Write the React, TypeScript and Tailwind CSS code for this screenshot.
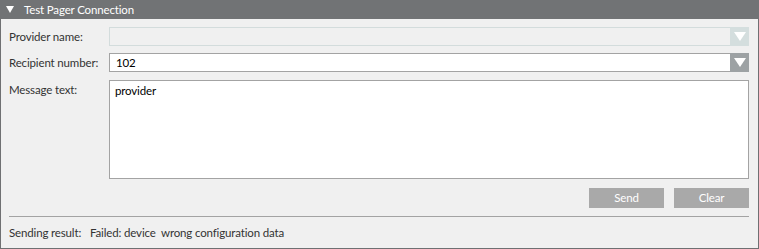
export default function App() {
  return (
    <div
      className="w-[759px] h-[249px] flex flex-col bg-[#f0f0f0] text-[11.5px] tracking-[-0.15px] text-[#333] whitespace-nowrap"
      style={{ fontFamily: '"Segoe UI", Lato, sans-serif' }}
    >
      {/* ── HEADER ── */}
      <div className="h-[19px] shrink-0 bg-[#717375] flex items-center text-white">
        <span className="ml-[6px] w-0 h-0 border-l-[4px] border-r-[4px] border-t-[7px] border-l-transparent border-r-transparent border-t-white" />
        <span className="ml-[10px] leading-none">Test Pager Connection</span>
      </div>

      {/* ── BODY ── */}
      <div className="flex-1 flex flex-col border-x border-b border-[#6f7072] pl-[8px] pr-[9px] pt-[8px]">
        <div className="flex items-center h-[19px]">
          <span className="w-[100px] shrink-0">Provider name:</span>
          <div className="flex-1 flex h-full border border-[#d3dcdc] bg-[#f0f0f0]">
            <div className="flex-1" />
            <div className="w-[19px] bg-[#d4dede] flex items-center justify-center -my-px -mr-px">
              <span className="w-0 h-0 border-l-[6px] border-r-[6px] border-t-[9px] border-l-transparent border-r-transparent border-t-white" />
            </div>
          </div>
        </div>

        <div className="flex items-center h-[19px] mt-[7px]">
          <span className="w-[100px] shrink-0">Recipient number:</span>
          <div className="flex-1 flex h-full border border-[#a3a3a3] bg-white">
            <div className="flex-1 pl-[6px] flex items-center text-black">102</div>
            <div className="w-[19px] bg-[#9da2a4] flex items-center justify-center -my-px -mr-px">
              <span className="w-0 h-0 border-l-[6px] border-r-[6px] border-t-[9px] border-l-transparent border-r-transparent border-t-white" />
            </div>
          </div>
        </div>

        <div className="flex mt-[8px]">
          <span className="w-[100px] shrink-0 pt-[1px]">Message text:</span>
          <div className="flex-1 h-[99px] border border-[#a3a3a3] bg-white px-[5px] pt-[1px] text-black">
            provider
          </div>
        </div>

        <div className="flex justify-end gap-[10px] mt-[9px]">
          <button className="w-[75px] h-[20px] bg-[#a9a9a9] text-white">Send</button>
          <button className="w-[75px] h-[20px] bg-[#a9a9a9] text-white">Clear</button>
        </div>

        <div className="h-px bg-[#a3a3a3] mt-[8px]" />

        <div className="flex items-center h-[31px]">
          <span className="w-[81px] shrink-0">Sending result:</span>
          <span className="whitespace-pre">Failed: device  wrong configuration data</span>
        </div>
      </div>
    </div>
  );
}
